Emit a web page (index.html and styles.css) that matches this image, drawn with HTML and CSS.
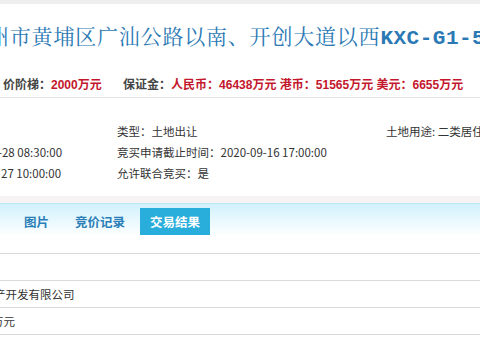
FILE: index.html
```html
<!DOCTYPE html>
<html lang="zh-CN">
<head>
    <meta charset="UTF-8">
    <title>土地交易详情</title>
    <link rel="stylesheet" href="styles.css">
</head>
<body>
    <div class="topbar"></div>
    <div class="title">州市黄埔区广汕公路以南、开创大道以西<span class="code">KXC-G1-5</span></div>
    <div class="price-row">
        <span class="label">价阶梯：</span><span class="red">2000万元</span>
        <span class="label deposit">保证金：</span><span class="red">人民币：46438万元 港币：51565万元 美元：6655万元</span>
    </div>
    <div class="info">
        <div></div>
        <div>类型：土地出让</div>
        <div>土地用途: 二类居住</div>
        <div class="cut-time">-28 08:30:00</div>
        <div>竞买申请截止时间：2020-09-16 17:00:00</div>
        <div></div>
        <div class="cut-time2">27 10:00:00</div>
        <div>允许联合竞买：是</div>
        <div></div>
    </div>
    <div class="tabs">
        <div class="tab">图片</div>
        <div class="tab">竞价记录</div>
        <div class="tab active">交易结果</div>
    </div>
    <div class="result">
        <div class="row"></div>
        <div class="row"><span class="cut-company">产开发有限公司</span></div>
        <div class="row"><span class="cut-price">万元</span></div>
    </div>
</body>
</html>
```

FILE: styles.css
```css
body {
    margin: 0;
    width: 480px;
    overflow: hidden;
    background-color: #fff;
    color: #333;
    font-family: "Noto Sans CJK SC", sans-serif;
    white-space: nowrap;
}
.topbar {
    height: 4px;
    background-color: #eee;
}
.title {
    padding-top: 16px;
    height: 30px;
    line-height: 30px;
    margin-left: -12px;
    font-family: "Noto Serif CJK SC", "Noto Sans CJK SC", serif;
    font-size: 21px;
    letter-spacing: 0.8px;
    color: #2a79b5;
}
.title .code {
    font-family: "Liberation Mono", monospace;
    font-size: 21px;
    font-weight: bold;
    letter-spacing: 0.5px;
}
.price-row {
    padding: 25px 0 2px 3px;
    height: 20px;
    line-height: 20px;
    font-family: "Liberation Sans", "Noto Sans CJK SC", sans-serif;
    font-size: 12px;
    font-weight: bold;
    border-bottom: 1px solid #e2e2e2;
}
.price-row .label {
    color: #444;
}
.price-row .red {
    color: #c3172d;
}
.price-row .deposit {
    margin-left: 18px;
}
.info {
    display: grid;
    grid-template-columns: 117px 269px 1fr;
    grid-auto-rows: 21px;
    line-height: 21px;
    padding: 23px 0 12px;
    font-size: 11.5px;
    color: #333;
    border-bottom: 7px solid #f5f3f3;
}
.cut-time {
    margin-left: -2px;
}
.cut-time2 {
    margin-left: 1px;
}
.tabs {
    display: flex;
    gap: 4px;
    height: 32px;
    padding-left: 13px;
    border-top: 1px solid #bde6f5;
    background: linear-gradient(#d0f1fc, #fff);
}
.tab {
    margin-top: 4px;
    height: 27px;
    line-height: 27px;
    padding: 0 11px;
    font-size: 12.5px;
    font-weight: bold;
    color: #2a7fb8;
}
.tab.active {
    padding: 0 10px;
    background-color: #29addb;
    color: #fff;
}
.result {
    margin-top: 17px;
    border-top: 1px solid #dadada;
}
.row {
    height: 26px;
    line-height: 26px;
    font-size: 11.5px;
    color: #333;
    border-bottom: 1px solid #dadada;
}
.cut-company {
    margin-left: -6px;
}
.cut-price {
    margin-left: -8px;
}
```
